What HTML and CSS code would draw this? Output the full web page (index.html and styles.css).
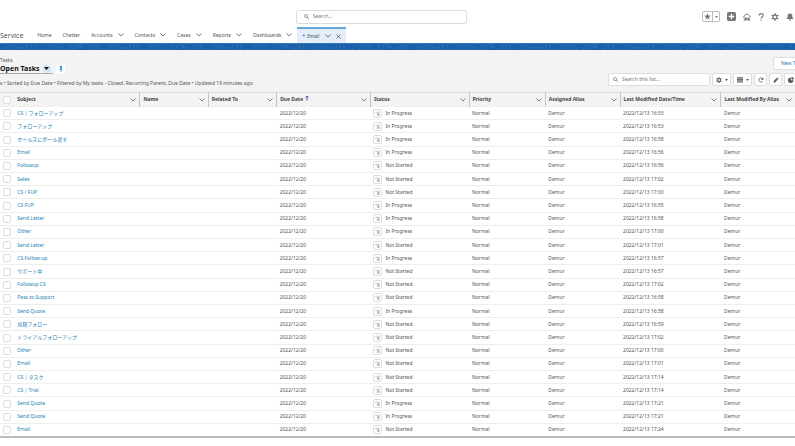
FILE: index.html
```html
<!DOCTYPE html>
<html lang="en">
<head>
    <meta charset="UTF-8">
    <meta name="viewport" content="width=device-width, initial-scale=1.0">
    <title>Open Tasks | Service</title>
    <link rel="stylesheet" href="styles.css">
</head>
<body>
    <!-- shared icons -->
    <svg class="sprite" aria-hidden="true">
        <symbol id="chevron" viewBox="0 0 12 8"><path d="M1 1l5 5 5-5" fill="none" stroke="currentColor" stroke-width="1.600"/></symbol>
        <symbol id="caret" viewBox="0 0 10 6"><path d="M0 0h10L5 6z"/></symbol>
        <symbol id="glass" viewBox="0 0 16 16"><circle cx="6.5" cy="6.5" r="5" fill="none" stroke="currentColor" stroke-width="2"/><path d="M10 10l5 5" stroke="currentColor" stroke-width="2.5"/></symbol>
        <symbol id="gear" viewBox="0 0 20 20"><g stroke="currentColor" stroke-width="4" stroke-linecap="round"><path d="M10 2v16M3 6l14 8M17 6L3 14"/></g><circle cx="10" cy="10" r="6.2"/><circle class="hole" cx="10" cy="10" r="3.4"/></symbol>
        <symbol id="picklist" viewBox="0 0 12 12"><path d="M1 3l1.500 1.500L5 1.500M6 3h5M5 6h6M5 8.500h6M5 11h6" fill="none" stroke="currentColor" stroke-width="1.200"/></symbol>
    </svg>

    <header class="topbar">
        <label class="search global-search">
            <svg><use href="#glass"/></svg>
            <input type="search" placeholder="Search..." aria-label="Search">
        </label>
        <div class="tools">
            <div class="favorites">
                <button aria-label="Favorite"><svg viewBox="0 0 20 20"><path d="M10 1l2.700 6.200 6.600.6-5 4.400 1.500 6.600L10 15.300l-5.800 3.500 1.500-6.600-5-4.400 6.600-.6z"/></svg></button>
                <button class="fav-list" aria-label="Favorites list"><svg><use href="#caret"/></svg></button>
            </div>
            <button class="add" aria-label="Add"><svg viewBox="0 0 20 20"><rect width="20" height="20" rx="4"/><path d="M10 4v12M4 10h12" stroke="#fff" stroke-width="3"/></svg></button>
            <button aria-label="Guidance"><svg viewBox="0 0 20 20"><path d="M3 13a4 4 0 0 1 1-6 6 6 0 0 1 11-1 4.500 4.500 0 0 1 2 7" fill="none" stroke="currentColor" stroke-width="2.500"/><path d="M1 19l6-9 3 4 3-4 6 9z"/><path d="M10 19v-4" stroke="#fff" stroke-width="2"/></svg></button>
            <button class="help" aria-label="Help"><svg viewBox="3 0 14 20"><path d="M5 6.500C5 0 15.500 0 15.500 6c0 4-5.300 4-5.300 8M10.200 16.500v3" fill="none" stroke="currentColor" stroke-width="2.800"/></svg></button>
            <button aria-label="Setup"><svg><use href="#gear"/></svg></button>
            <button aria-label="Notifications"><svg viewBox="0 0 20 20"><path d="M10 1c4 0 6 3 6 6.500 0 4 1 5 3 7.500H1c2-2.500 3-3.500 3-7.500C4 4 6 1 10 1zM7 16.500h6a3 3 0 0 1-6 0z"/></svg></button>
        </div>
    </header>

    <nav class="nav">
        <span class="app-name">Service</span>
        <a href="#">Home</a>
        <a href="#">Chatter</a>
        <a href="#">Accounts <svg><use href="#chevron"/></svg></a>
        <a href="#">Contacts <svg><use href="#chevron"/></svg></a>
        <a href="#">Cases <svg><use href="#chevron"/></svg></a>
        <a href="#">Reports <svg><use href="#chevron"/></svg></a>
        <a href="#">Dashboards <svg><use href="#chevron"/></svg></a>
        <div class="tab">
            <a href="#"><b>*</b> <i>Email</i> <svg><use href="#chevron"/></svg></a>
            <button aria-label="Close tab"><svg viewBox="0 0 10 10"><path d="M1 1l8 8M9 1L1 9" stroke="currentColor" stroke-width="1.600"/></svg></button>
        </div>
    </nav>

    <svg class="band" aria-hidden="true">
        <defs>
            <pattern id="waves" width="103" height="7" patternUnits="userSpaceOnUse">
                <path d="M4 7l5-6M8 7l5-6M12 7l5-6M17 4h7M27 1v5M31 1v5M35 1v5M39 6h6M47 1l5 6M51 1l5 6M55 1l5 6M59 1l5 6M68 6l3-5M72 6l3-5M76 1h5M78 3h5M88 6l4-5M94 1v6M98 1v4"/>
            </pattern>
        </defs>
        <rect width="100%" height="100%" fill="url(#waves)"/>
    </svg>

    <main>
        <section class="page-head">
            <div class="head-left">
                <p>Tasks</p>
                <div class="title-row">
                    <div class="title">
                        <h1>Open Tasks</h1>
                        <button class="view-menu" aria-label="Select a list view"><svg><use href="#caret"/></svg></button>
                    </div>
                    <button class="pin" aria-label="Pin this list"><svg viewBox="0 0 10 16"><path d="M2 0h6v2L7 3v4l3 3H0l3-3V3L2 2zM4 10h2v6H4z"/></svg></button>
                </div>
                <p class="info">s • Sorted by Due Date • Filtered by My tasks - Closed, Recurring Parent, Due Date • Updated 19 minutes ago</p>
            </div>
            <div class="head-right">
                <button class="box new-task">New Task</button>
                <div class="list-tools">
                    <label class="search list-search">
                        <svg><use href="#glass"/></svg>
                        <input type="search" placeholder="Search this list..." aria-label="Search this list">
                    </label>
                    <button class="box wide" aria-label="List view controls"><svg><use href="#gear"/></svg><svg class="drop"><use href="#caret"/></svg></button>
                    <button class="box wide" aria-label="Display as table"><svg viewBox="0 0 20 20"><path d="M0 1h20v4H0zM0 7h6v3H0zM7 7h6v3H7zM14 7h6v3h-6zM0 11h6v3H0zM7 11h6v3H7zM14 11h6v3h-6zM0 15h6v3H0zM7 15h6v3H7zM14 15h6v3h-6z"/></svg><svg class="drop"><use href="#caret"/></svg></button>
                    <button class="box" aria-label="Refresh"><svg viewBox="0 0 20 20"><path d="M16 13.500A7 7 0 1 1 15 5" fill="none" stroke="currentColor" stroke-width="2.500"/><path d="M18 1v8h-8z"/></svg></button>
                    <button class="box" aria-label="Edit"><svg viewBox="0 0 20 20"><path d="M1 19l1.500-6L12 3.500 16.500 8 7 17.500zM13.500 2l2-1.500 4 4-1.500 2z"/></svg></button>
                    <button class="box" aria-label="Charts"><svg viewBox="0 0 20 20"><path d="M9 2a9 9 0 1 0 9 9H9z"/><path d="M11.500 0v8.500H20A8.500 8.500 0 0 0 11.500 0z"/></svg></button>
                </div>
            </div>
        </section>

        <div class="table-wrap">
            <table>
                <colgroup>
                    <col class="c-check"><col class="c-subject"><col class="c-name"><col class="c-related"><col class="c-due">
                    <col class="c-status"><col class="c-priority"><col class="c-assigned"><col class="c-modified"><col>
                </colgroup>
                <thead>
                    <tr>
                        <th class="check"><input type="checkbox" aria-label="Select all"></th>
                        <th><div>Subject <svg><use href="#chevron"/></svg></div></th>
                        <th><div>Name <svg><use href="#chevron"/></svg></div></th>
                        <th><div>Related To <svg><use href="#chevron"/></svg></div></th>
                        <th><div>Due Date <svg class="sort" viewBox="0 0 10 14"><path d="M5 14V2M1 6l4-4 4 4" fill="none" stroke="currentColor" stroke-width="2"/></svg><svg><use href="#chevron"/></svg></div></th>
                        <th><div>Status <svg><use href="#chevron"/></svg></div></th>
                        <th><div>Priority <svg><use href="#chevron"/></svg></div></th>
                        <th><div>Assigned Alias <svg><use href="#chevron"/></svg></div></th>
                        <th><div>Last Modified Date/Time <svg><use href="#chevron"/></svg></div></th>
                        <th><div>Last Modified By Alias <svg><use href="#chevron"/></svg></div></th>
                    </tr>
                </thead>
                <tbody id="tasks"></tbody>
            </table>
        </div>
    </main>

    <script>
        const P = 'In Progress', N = 'Not Started';
        const tasks = [
            ['CS | フォローアップ', P, '16:53'],
            ['フォローアップ', P, '16:53'],
            ['セールスにボール渡す', P, '16:58'],
            ['Email', P, '16:56'],
            ['Followup', N, '16:56'],
            ['Sales', N, '17:02'],
            ['CS / FUP', N, '17:00'],
            ['CS FUP', P, '16:55'],
            ['Send Letter', P, '16:58'],
            ['Other', P, '17:00'],
            ['Send Letter', N, '17:01'],
            ['CS Follow-up', P, '16:57'],
            ['サポート中', N, '16:57'],
            ['Followup CS', N, '17:02'],
            ['Pass to Support', N, '16:58'],
            ['Send Quote', P, '16:58'],
            ['見積フォロー', N, '16:59'],
            ['トライアルフォローアップ', N, '17:02'],
            ['Other', N, '17:00'],
            ['Email', N, '17:01'],
            ['CS | タスク', N, '17:14'],
            ['CS | Trial', N, '17:14'],
            ['Send Quote', P, '17:21'],
            ['Send Quote', P, '17:21'],
            ['Email', N, '17:24']
        ];

        document.getElementById('tasks').innerHTML = tasks.map(([subject, status, time]) => `
            <tr>
                <td class="check"><input type="checkbox" aria-label="Select ${subject}"></td>
                <td><a href="#">${subject}</a></td>
                <td></td>
                <td></td>
                <td>2022/12/20</td>
                <td><div class="status"><button aria-label="Change status"><svg><use href="#picklist"/></svg></button>${status}</div></td>
                <td>Normal</td>
                <td>Demur</td>
                <td>2022/12/13 ${time}</td>
                <td>Demur</td>
            </tr>`).join('');
    </script>
</body>
</html>
```
FILE: styles.css
```css
* {
    margin: 0;
    padding: 0;
    box-sizing: border-box;
}
body {
    display: flex;
    flex-direction: column;
    height: 100vh;
    overflow-x: hidden;
    background: #fff;
    color: #555;
    font: 5px/7px "Noto Sans", "Noto Sans CJK JP", sans-serif;
    white-space: nowrap;
}
a {
    color: inherit;
    text-decoration: none;
}
button {
    display: flex;
    align-items: center;
    justify-content: center;
    background: none;
    border: none;
    color: inherit;
    font: inherit;
    cursor: pointer;
}
svg {
    flex: none;
    fill: currentColor;
}
.sprite {
    position: absolute;
    width: 0;
    height: 0;
}
.hole {
    fill: #fff;
}

/* top bar */
.topbar {
    display: flex;
    align-items: center;
    justify-content: space-between;
    height: 27px;
    padding-top: 6px;
    padding-left: 37.2%;
}
.search {
    display: flex;
    align-items: center;
    gap: 4px;
    height: 14px;
    background: #fff;
    border: 1px solid #ddd;
    border-radius: 2px;
}
.search svg {
    width: 5px;
    height: 5px;
    color: #666;
}
.search input {
    flex: 1;
    min-width: 0;
    border: none;
    outline: none;
    background: none;
    color: #555;
    font: inherit;
}
.search input::placeholder {
    color: #777;
}
.global-search {
    width: 34.3%;
    padding-left: 7px;
}
.tools {
    display: flex;
    align-items: center;
    gap: 7px;
    padding-right: 1px;
    color: #777;
}
.tools svg {
    width: 8px;
    height: 8px;
}
.tools .add svg {
    width: 9px;
    height: 9px;
}
.tools .help svg {
    width: 6px;
}
.favorites {
    display: flex;
    height: 11px;
    border: 1px solid #bbb;
    border-radius: 2px;
}
.favorites button {
    width: 9px;
}
.favorites .fav-list {
    width: 7px;
    border-left: 1px solid #bbb;
}
.favorites svg {
    width: 7px;
    height: 7px;
}
.favorites .fav-list svg {
    width: 3px;
    height: 2px;
}

/* navigation */
.nav {
    display: flex;
    align-items: center;
    gap: 11px;
    height: 16px;
}
.nav a {
    display: flex;
    align-items: center;
    gap: 5px;
}
.nav svg {
    width: 6px;
    height: 4px;
}
.app-name {
    margin-right: 3px;
    font-size: 7px;
}
.tab {
    display: flex;
    align-items: center;
    gap: 5px;
    align-self: stretch;
    margin-left: -6px;
    padding: 0 5px;
    background: #e4eefa;
    border-top: 2px solid #62a8dd;
}
.tab a {
    gap: 2px;
}
.tab a svg {
    margin-left: 4px;
}
.tab b {
    color: #1589ee;
}
.tab button svg {
    width: 5px;
    height: 5px;
}
.band {
    width: 100%;
    height: 7px;
    background: #1a5fa8;
    border-top: 1px solid #2c79c6;
}
.band path {
    fill: none;
    stroke: #4383c0;
    stroke-width: 1;
    opacity: 0.5;
}

/* list header */
main {
    display: flex;
    flex: 1;
    flex-direction: column;
}
.page-head {
    display: flex;
    justify-content: space-between;
    height: 42px;
    padding-top: 7px;
    background: #f3f3f3;
}
.title-row {
    display: flex;
    align-items: center;
    gap: 3px;
}
.title {
    display: flex;
    align-items: center;
    gap: 3px;
    width: 53px;
    height: 10px;
    border-bottom: 1px solid #aaa;
}
h1 {
    color: #111;
    font-size: 7px;
    line-height: 9px;
}
.view-menu {
    width: 8px;
    height: 8px;
    background: #cfe6f8;
    border-radius: 4px;
    color: #111;
}
.view-menu svg {
    width: 5px;
    height: 3px;
}
.pin {
    width: 9px;
    height: 9px;
    background: #fff;
    border-radius: 2px;
    color: #1589ee;
}
.pin svg {
    width: 4px;
    height: 6px;
}
.info {
    margin-top: 6px;
}
.head-right {
    display: flex;
    flex-direction: column;
    align-items: flex-end;
    gap: 3px;
    margin-right: -2px;
}
.box {
    width: 13px;
    height: 13px;
    background: #fff;
    border: 1px solid #ddd;
    border-radius: 2px;
    color: #555;
}
.box svg {
    width: 6px;
    height: 6px;
}
.wide {
    gap: 3px;
    width: 19px;
}
.box .drop {
    width: 3px;
    height: 2px;
}
.new-task {
    justify-content: flex-start;
    width: 24px;
    padding-left: 7px;
    overflow: hidden;
    color: #1f7ab8;
}
.list-tools {
    display: flex;
    gap: 2px;
}
.list-search {
    width: 102px;
    height: 13px;
    padding-left: 4px;
}

/* table */
.table-wrap {
    flex: 1;
    height: 0;
    margin-bottom: 8px;
    border-bottom: 2px solid #bbb;
}
table {
    width: 100%;
    height: 100%;
    border-collapse: collapse;
    table-layout: fixed;
}
.c-check { width: 1.8%; }
.c-subject { width: 15.8%; }
.c-name { width: 8.6%; }
.c-related { width: 8.6%; }
.c-due { width: 11.8%; }
.c-status { width: 12.4%; }
.c-priority { width: 9.6%; }
.c-assigned { width: 9.4%; }
.c-modified { width: 12.7%; }
thead tr {
    height: 14px;
    background: #f3f3f3;
    border-top: 1px solid #ddd;
}
th {
    border-right: 1px solid #c4c4c4;
    color: #444;
    text-align: left;
}
th.check, th:last-child {
    border-right: none;
}
th, td {
    padding: 0 3px;
}
th div {
    display: flex;
    align-items: center;
    gap: 2px;
}
th svg {
    width: 6px;
    height: 4px;
    margin-left: auto;
    color: #666;
}
th .sort {
    width: 4px;
    height: 6px;
    margin-left: 0;
    margin-bottom: 3px;
    color: #2a4a8a;
}
tbody tr {
    border-top: 1px solid #eee;
}
td a {
    color: #2381b5;
}
.check input {
    display: block;
    width: 8px;
    height: 8px;
    appearance: none;
    background: #fff;
    border: 1px solid #ddd;
    border-radius: 2px;
}
.status {
    display: flex;
    align-items: center;
    gap: 3px;
}
.status button {
    width: 9px;
    height: 9px;
    border: 1px solid #ddd;
    border-radius: 2px;
}
.status svg {
    width: 5px;
    height: 5px;
    color: #777;
}
```
